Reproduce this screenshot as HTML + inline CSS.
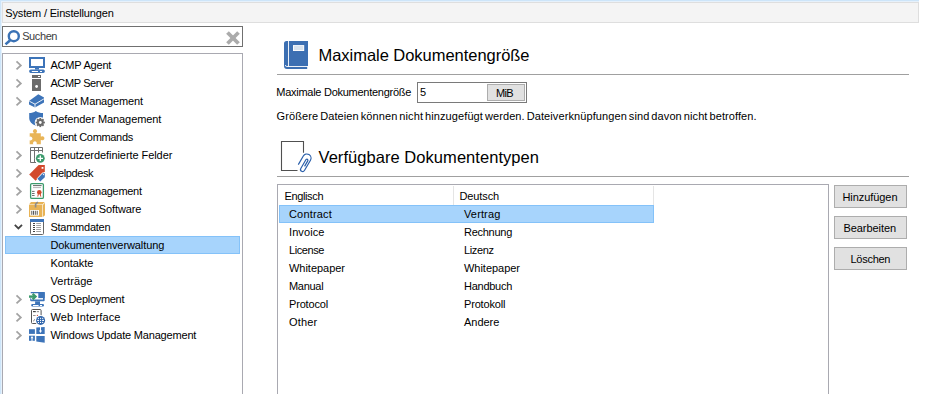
<!DOCTYPE html>
<html><head><meta charset="utf-8">
<style>
html,body{margin:0;padding:0;width:925px;height:407px;overflow:hidden;background:#fff;}
body{position:relative;font-family:"Liberation Sans",sans-serif;}
.a{position:absolute;box-sizing:border-box;}
.t{position:absolute;white-space:pre;font-family:"Liberation Sans",sans-serif;}
svg{position:absolute;overflow:visible;}
</style></head><body>
<!-- window frame blue lines -->
<div class="a" style="left:0;top:0;width:919px;height:1px;background:#cde5f9"></div>
<div class="a" style="left:0;top:1px;width:919px;height:1px;background:#e6f1fb"></div>
<div class="a" style="left:0;top:0;width:1px;height:394px;background:#cde5f9"></div>
<div class="a" style="left:1px;top:1px;width:1px;height:393px;background:#e6f1fb"></div>
<!-- title bar -->
<div class="a" style="left:2px;top:2px;width:917px;height:21px;background:#f4f4f4;border:1px solid #dedede"></div>
<!-- search box -->
<div class="a" style="left:2px;top:26px;width:241px;height:21px;background:#fff;border:1px solid #707070"></div>
<!-- tree -->
<div class="a" style="left:2px;top:53px;width:241px;height:341px;background:#fff;border:1px solid #a9a9b1;border-bottom:none"></div>
<!-- tree selection -->
<div class="a" style="left:5px;top:236px;width:235px;height:18px;background:#a7d4fc;border:1px solid #84c2f9"></div>
<!-- rules -->
<div class="a" style="left:277px;top:74px;width:632px;height:1px;background:#a0a0a0"></div>
<div class="a" style="left:277px;top:176px;width:632px;height:1px;background:#a0a0a0"></div>
<!-- input -->
<div class="a" style="left:417px;top:82px;width:110px;height:21px;background:#fff;border:1px solid #7a7a7a"></div>
<div class="a" style="left:487px;top:84px;width:38px;height:17px;background:#e1e1e1;border:1px solid #adadad"></div>
<!-- list -->
<div class="a" style="left:277px;top:184px;width:552px;height:210px;background:#fff;border:1px solid #a9a9b1;border-bottom:none"></div>
<div class="a" style="left:453px;top:186px;width:1px;height:19px;background:#e5e5e5"></div>
<div class="a" style="left:653px;top:186px;width:1px;height:19px;background:#e5e5e5"></div>
<div class="a" style="left:279px;top:205px;width:375px;height:18px;background:#a7d4fc;border:1px solid #84c2f9"></div>
<!-- buttons -->
<div class="a" style="left:834px;top:185px;width:73px;height:23px;background:#e1e1e1;border:1px solid #adadad"></div>
<div class="a" style="left:834px;top:216px;width:73px;height:23px;background:#e1e1e1;border:1px solid #adadad"></div>
<div class="a" style="left:834px;top:247px;width:73px;height:23px;background:#e1e1e1;border:1px solid #adadad"></div>
<svg style="left:0;top:0" width="925" height="407" viewBox="0 0 925 407">
<!-- search icon -->
<circle cx="13.8" cy="36.2" r="5" fill="none" stroke="#3a72b5" stroke-width="2.4"/>
<path d="M4.6 43.4L9 39.4L11 41.2L6.4 45.2Z" fill="#3a72b5"/>
<!-- clear X -->
<line x1="227.5" y1="32.5" x2="238.5" y2="43.5" stroke="#ababab" stroke-width="3.8"/>
<line x1="238.5" y1="32.5" x2="227.5" y2="43.5" stroke="#ababab" stroke-width="3.8"/>
<!-- chevrons -->
<g fill="none" stroke="#a3a3a3" stroke-width="1.8">
<path d="M16.5 61.4L20.8 65.4L16.5 69.4"/>
<path d="M16.5 79.4L20.8 83.4L16.5 87.4"/>
<path d="M16.5 97.4L20.8 101.4L16.5 105.4"/>
<path d="M16.5 151.4L20.8 155.4L16.5 159.4"/>
<path d="M16.5 169.4L20.8 173.4L16.5 177.4"/>
<path d="M16.5 187.4L20.8 191.4L16.5 195.4"/>
<path d="M16.5 205.4L20.8 209.4L16.5 213.4"/>
<path d="M16.5 295.4L20.8 299.4L16.5 303.4"/>
<path d="M16.5 313.4L20.8 317.4L16.5 321.4"/>
<path d="M16.5 331.4L20.8 335.4L16.5 339.4"/>
</g>
<path d="M14.8 224.8L18.4 228.4L22 224.8" fill="none" stroke="#444" stroke-width="1.8"/>

<!-- 0 monitor -->
<g fill="#3d74b9">
<path d="M29 57h16v11h-16z M31 59v7h12v-7z" fill-rule="evenodd"/>
<rect x="35" y="68" width="4" height="1.6"/>
<path d="M30.8 69.5h12.4a1.7 1.7 0 0 1 0 3.4h-12.4a1.7 1.7 0 0 1 0-3.4z M31.8 71h6.2v1h-6.2z M40 71h2v1h-2z" fill-rule="evenodd"/>
</g>
<!-- 1 server -->
<g fill="#6b6b6b">
<path d="M32 75h9v3h-9z M38 76v1h2v-1z" fill-rule="evenodd"/>
<rect x="32" y="79" width="9" height="12"/>
<circle cx="36.6" cy="86.5" r="1.4" fill="#fff"/>
</g>
<!-- 2 asset box -->
<path d="M29 101L38.3 94.2L44 97.5V102.5L35 107.6L29 104.5Z" fill="#3d74b9"/>
<path d="M29.3 101.2L35 104.2L44 98.8M35 104.2V107.6" fill="none" stroke="#fff" stroke-width="0.9"/>
<!-- 3 shield with gear -->
<path d="M35.8 111C34 112.4 31.5 113 29.2 113V118C29.2 121.5 32 124.3 35.8 125.7C39.6 124.3 43 121.5 43 118V113C40.3 113 37.8 112.4 35.8 111Z" fill="#3d74b9"/>
<circle cx="40.3" cy="122.5" r="5.6" fill="#fff"/>
<g transform="translate(40.3 122.5)" fill="#6b6b6b">
<circle r="3.4"/>
<g id="teeth"><rect x="-0.9" y="-4.6" width="1.8" height="9.2"/><rect x="-0.9" y="-4.6" width="1.8" height="9.2" transform="rotate(45)"/><rect x="-0.9" y="-4.6" width="1.8" height="9.2" transform="rotate(90)"/><rect x="-0.9" y="-4.6" width="1.8" height="9.2" transform="rotate(135)"/></g>
<circle r="1.4" fill="#fff"/>
</g>
<!-- 4 puzzle -->
<g fill="#e9b558">
<path d="M29.7 133.2H33.6V132.6A2.05 2.05 0 1 1 36.4 132.6V133.2H40.8V136.5H41.4A2.05 2.05 0 1 1 41.4 140.1H40.8V144.2H36.5A1.9 1.9 1 1 0 33.3 144.2H29.7V140.2A1.9 1.9 0 1 0 29.7 136.8Z"/>
</g>
<!-- 5 custom fields grid + plus -->
<g fill="none" stroke="#707070" stroke-width="1">
<path d="M30.5 162.5V147.5H42.5V152.5M30.5 150.5H42.5M34.5 147.5V162.5M38.5 147.5V152.5M30.5 162.5H36"/>
</g>
<circle cx="40.3" cy="158.3" r="5.4" fill="#fff"/>
<circle cx="40.3" cy="158.3" r="4.4" fill="#3c9a6c"/>
<path d="M40.3 155.6V161M37.6 158.3H43" stroke="#fff" stroke-width="1.3"/>
<!-- 6 helpdesk tags -->
<path d="M38.6 165H44.8V171.5L35.6 180.8L29.2 174.4Z" fill="#d24a2d"/>
<rect x="41.6" y="167" width="1.8" height="1.8" fill="#fff"/>
<path d="M42.4 172.4L45.2 172.4V177.3L40.2 182.4L36.6 178.8Z" fill="#fff"/>
<path d="M42.8 173.2H44.8V177.2L40.2 181.6L37.4 178.8Z" fill="#3d74b9"/>
<circle cx="43.5" cy="174.6" r="0.7" fill="#fff"/>
<!-- 7 license certificate -->
<rect x="30.6" y="183.6" width="12.8" height="14.8" rx="1.2" fill="#fff" stroke="#3c9a6c" stroke-width="1.3"/>
<path d="M33 185.6H41.6" stroke="#555" stroke-width="0.9"/>
<path d="M33 187.6H41" stroke="#a0a0a0" stroke-width="0.8"/>
<path d="M32 191.4H34.6M32 193.5H34.6M32 195.5H34.6" stroke="#606060" stroke-width="0.9"/>
<path d="M38.4 193.6L37.8 196.6M40.2 193.6L40.8 196.6" stroke="#d24a2d" stroke-width="1"/>
<circle cx="39.3" cy="192.2" r="2.3" fill="#d24a2d"/>
<!-- 8 managed software box -->
<path d="M31 202H44.8L42.4 204.4H29Z" fill="#e8b356"/>
<rect x="29" y="205" width="13.3" height="12" fill="#e8b356"/>
<path d="M42.9 205L45 202.8V215.2L42.9 217Z" fill="#e8b356"/>
<path d="M37.8 202L35.6 204.2V207.6" fill="none" stroke="#8c8c8c" stroke-width="1.6"/>
<rect x="30.2" y="210" width="8.8" height="5.6" fill="#fff"/>
<path d="M31.8 210.8V214.8M33.5 210.8V214.8M35.3 210.8V214.8M37.2 210.8V214.8" stroke="#444" stroke-width="0.9"/>
<!-- 9 stammdaten -->
<rect x="30.5" y="219.5" width="13" height="15" rx="1" fill="#fff" stroke="#666" stroke-width="1"/>
<rect x="30" y="219" width="14" height="3" fill="#3d74b9"/>
<path d="M33 223.5H35M33 225.5H35M33 227.5H35M33 229.5H35M33 231.5H35" stroke="#444" stroke-width="1"/>
<path d="M36.2 223.5H41M36.2 225.5H41M36.2 227.5H41M36.2 229.5H41M36.2 231.5H41" stroke="#999" stroke-width="0.9"/>
<!-- 13 OS deployment -->
<g fill="#3d74b9">
<path d="M30.7 292H43.7A1 1 0 0 1 44.7 293V300.3A1 1 0 0 1 43.7 301.3H31.2A1 1 0 0 1 30.2 300.3V298.2H31.2V299.6H43V293.3H30.7Z"/>
<rect x="38.3" y="292" width="6.4" height="6.1"/>
<rect x="35.1" y="301.3" width="4.9" height="2.7"/>
<path d="M32.4 304H42.8A1.25 1.25 0 0 1 42.8 306.5H32.4A1.25 1.25 0 0 1 32.4 304Z M33 305h5.6v0.9h-5.6z M40 305h2v0.9h-2z" fill-rule="evenodd"/>
</g>
<path d="M29 296.6H35" fill="none" stroke="#3c9a6c" stroke-width="2.4"/>
<path d="M32.6 293.9L35.6 296.6L32.6 299.4" fill="none" stroke="#3c9a6c" stroke-width="2.2"/>
<!-- 14 web interface -->
<rect x="31.5" y="309.5" width="9.6" height="14" rx="1" fill="#fff" stroke="#555" stroke-width="1"/>
<path d="M33 311.6H35.8" stroke="#444" stroke-width="1.2"/>
<path d="M36.8 311.6H39" stroke="#999" stroke-width="1.2"/>

<path d="M33 315.5H35.6" stroke="#999" stroke-width="1"/>
<circle cx="37.4" cy="315.4" r="0.6" fill="#d24a2d"/>
<path d="M33.2 321.2L35 319.4" stroke="#666" stroke-width="0.9"/>
<circle cx="40.6" cy="320.4" r="5.4" fill="#fff"/>
<circle cx="40.6" cy="320.4" r="4.5" fill="#2f64ab"/>
<g fill="#fff"><rect x="37.9" y="317.8" width="1.1" height="1.1"/><rect x="40.0" y="317.8" width="1.1" height="1.1"/><rect x="42.1" y="317.8" width="1.1" height="1.1"/>
<rect x="37.1" y="319.85" width="1.9" height="1.1"/><rect x="40.0" y="319.85" width="1.1" height="1.1"/><rect x="42.1" y="319.85" width="1.9" height="1.1"/>
<rect x="37.9" y="321.9" width="1.1" height="1.1"/><rect x="40.0" y="321.9" width="1.1" height="1.1"/><rect x="42.1" y="321.9" width="1.1" height="1.1"/></g>
<!-- 15 windows -->
<g fill="#3d74b9">
<rect x="29" y="329.2" width="5.9" height="4.7"/>
<path d="M36.3 327.6L44.7 327.1V334.1H36.3Z"/>
<rect x="29" y="335.7" width="5.9" height="5.1"/>
<path d="M36.3 335.9H44.7V342.8L36.3 341.6Z"/>
</g>
<path d="M40.5 327V331" fill="none" stroke="#fff" stroke-width="1"/>
<path d="M38.9 330.6H42.1L40.5 332.9Z" fill="#fff"/>
<path d="M32 341V337.6" fill="none" stroke="#fff" stroke-width="1"/>
<path d="M30.5 338.2H33.5L32 336.1Z" fill="#fff"/>

<!-- book icon -->
<path d="M286.5 41H308V66H307.2V69H286.9A2.9 2.9 0 0 1 284 66.1V43.5A2.5 2.5 0 0 1 286.5 41Z" fill="#3c6fb2"/>
<path d="M288.5 41V66.5M308.5 66.5H286.8A1.4 1.4 0 0 1 285.4 65.1" fill="none" stroke="#fff" stroke-width="0.9"/>
<rect x="293" y="45.1" width="11.2" height="5.9" fill="#fff"/>
<rect x="293.8" y="45.9" width="9.6" height="4.3" fill="#d9e3ee"/>
<!-- document + paperclip -->
<path d="M303.5 152.8V141.5H281.5V170.5H297.5" fill="none" stroke="#505050" stroke-width="1.1"/>
<path d="M298.3 164.6L303.31 156.01A4.15 4.15 0 0 1 310.48 160.19L304.43 170.56A2.1 2.1 0 0 1 300.8 168.45L305.87 159.76A1.1 1.1 0 0 1 307.77 160.87L304.55 166.4" fill="none" stroke="#2a5faa" stroke-width="1.2"/>
</svg>

<div class="t" style="left:5.3px;top:4px;font-size:11px;line-height:18px;letter-spacing:-0.161px;word-spacing:0px;color:#000;">System / Einstellungen</div>
<div class="t" style="left:22.2px;top:27px;font-size:11px;line-height:18px;letter-spacing:-0.403px;word-spacing:0px;color:#3c3c3c;">Suchen</div>
<div class="t" style="left:50.4px;top:56px;font-size:11px;line-height:18px;letter-spacing:-0.198px;word-spacing:0px;color:#000;">ACMP Agent</div>
<div class="t" style="left:50.4px;top:74px;font-size:11px;line-height:18px;letter-spacing:-0.375px;word-spacing:0px;color:#000;">ACMP Server</div>
<div class="t" style="left:50.4px;top:92px;font-size:11px;line-height:18px;letter-spacing:-0.139px;word-spacing:0px;color:#000;">Asset Management</div>
<div class="t" style="left:50.4px;top:110px;font-size:11px;line-height:18px;letter-spacing:-0.084px;word-spacing:0px;color:#000;">Defender Management</div>
<div class="t" style="left:50.4px;top:128px;font-size:11px;line-height:18px;letter-spacing:-0.330px;word-spacing:0px;color:#000;">Client Commands</div>
<div class="t" style="left:50.4px;top:146px;font-size:11px;line-height:18px;letter-spacing:-0.063px;word-spacing:0px;color:#000;">Benutzerdefinierte Felder</div>
<div class="t" style="left:50.4px;top:164px;font-size:11px;line-height:18px;letter-spacing:-0.380px;word-spacing:0px;color:#000;">Helpdesk</div>
<div class="t" style="left:50.4px;top:182px;font-size:11px;line-height:18px;letter-spacing:-0.294px;word-spacing:0px;color:#000;">Lizenzmanagement</div>
<div class="t" style="left:50.4px;top:200px;font-size:11px;line-height:18px;letter-spacing:-0.083px;word-spacing:0px;color:#000;">Managed Software</div>
<div class="t" style="left:50.4px;top:218px;font-size:11px;line-height:18px;letter-spacing:-0.242px;word-spacing:0px;color:#000;">Stammdaten</div>
<div class="t" style="left:50.4px;top:236px;font-size:11px;line-height:18px;letter-spacing:-0.083px;word-spacing:0px;color:#000;">Dokumentenverwaltung</div>
<div class="t" style="left:50.4px;top:254px;font-size:11px;line-height:18px;letter-spacing:-0.060px;word-spacing:0px;color:#000;">Kontakte</div>
<div class="t" style="left:50.4px;top:272px;font-size:11px;line-height:18px;letter-spacing:0.072px;word-spacing:0px;color:#000;">Verträge</div>
<div class="t" style="left:50.4px;top:290px;font-size:11px;line-height:18px;letter-spacing:-0.296px;word-spacing:0px;color:#000;">OS Deployment</div>
<div class="t" style="left:50.4px;top:308px;font-size:11px;line-height:18px;letter-spacing:0.152px;word-spacing:0px;color:#000;">Web Interface</div>
<div class="t" style="left:50.4px;top:326px;font-size:11px;line-height:18px;letter-spacing:-0.184px;word-spacing:0px;color:#000;">Windows Update Management</div>
<div class="t" style="left:318.5px;top:43px;font-size:16.5px;line-height:24px;letter-spacing:-0.037px;word-spacing:0px;color:#000;">Maximale Dokumentengröße</div>
<div class="t" style="left:318.5px;top:145px;font-size:16.5px;line-height:24px;letter-spacing:0.051px;word-spacing:0px;color:#000;">Verfügbare Dokumententypen</div>
<div class="t" style="left:276.3px;top:83px;font-size:11px;line-height:18px;letter-spacing:-0.271px;word-spacing:0px;color:#000;">Maximale Dokumentengröße</div>
<div class="t" style="left:420px;top:83px;font-size:11px;line-height:18px;letter-spacing:0.000px;word-spacing:0px;color:#000;">5</div>
<div class="t" style="left:496px;top:84px;font-size:11px;line-height:18px;letter-spacing:-0.727px;word-spacing:0px;color:#000;">MiB</div>
<div class="t" style="left:276.6px;top:107px;font-size:11px;line-height:18px;letter-spacing:0.097px;word-spacing:-1.2px;color:#000;">Größere Dateien können nicht hinzugefügt werden. Dateiverknüpfungen sind davon nicht betroffen.</div>
<div class="t" style="left:284.5px;top:187px;font-size:11px;line-height:18px;letter-spacing:-0.368px;word-spacing:0px;color:#000;">Englisch</div>
<div class="t" style="left:459.5px;top:187px;font-size:11px;line-height:18px;letter-spacing:-0.110px;word-spacing:0px;color:#000;">Deutsch</div>
<div class="t" style="left:289px;top:205px;font-size:11px;line-height:18px;letter-spacing:0.160px;word-spacing:0px;color:#000;">Contract</div>
<div class="t" style="left:464px;top:205px;font-size:11px;line-height:18px;letter-spacing:0.139px;word-spacing:0px;color:#000;">Vertrag</div>
<div class="t" style="left:289px;top:223px;font-size:11px;line-height:18px;letter-spacing:0.090px;word-spacing:0px;color:#000;">Invoice</div>
<div class="t" style="left:464px;top:223px;font-size:11px;line-height:18px;letter-spacing:-0.265px;word-spacing:0px;color:#000;">Rechnung</div>
<div class="t" style="left:289px;top:241px;font-size:11px;line-height:18px;letter-spacing:-0.420px;word-spacing:0px;color:#000;">License</div>
<div class="t" style="left:464px;top:241px;font-size:11px;line-height:18px;letter-spacing:-0.379px;word-spacing:0px;color:#000;">Lizenz</div>
<div class="t" style="left:289px;top:259px;font-size:11px;line-height:18px;letter-spacing:-0.030px;word-spacing:0px;color:#000;">Whitepaper</div>
<div class="t" style="left:464px;top:259px;font-size:11px;line-height:18px;letter-spacing:-0.030px;word-spacing:0px;color:#000;">Whitepaper</div>
<div class="t" style="left:289px;top:277px;font-size:11px;line-height:18px;letter-spacing:-0.296px;word-spacing:0px;color:#000;">Manual</div>
<div class="t" style="left:464px;top:277px;font-size:11px;line-height:18px;letter-spacing:-0.265px;word-spacing:0px;color:#000;">Handbuch</div>
<div class="t" style="left:289px;top:295px;font-size:11px;line-height:18px;letter-spacing:-0.166px;word-spacing:0px;color:#000;">Protocol</div>
<div class="t" style="left:464px;top:295px;font-size:11px;line-height:18px;letter-spacing:-0.175px;word-spacing:0px;color:#000;">Protokoll</div>
<div class="t" style="left:289px;top:313px;font-size:11px;line-height:18px;letter-spacing:0.171px;word-spacing:0px;color:#000;">Other</div>
<div class="t" style="left:464px;top:313px;font-size:11px;line-height:18px;letter-spacing:-0.017px;word-spacing:0px;color:#000;">Andere</div>
<div class="t" style="left:842.5px;top:188px;font-size:11px;line-height:18px;letter-spacing:-0.073px;word-spacing:0px;color:#000;">Hinzufügen</div>
<div class="t" style="left:843.5px;top:219px;font-size:11px;line-height:18px;letter-spacing:-0.069px;word-spacing:0px;color:#000;">Bearbeiten</div>
<div class="t" style="left:850.5px;top:250px;font-size:11px;line-height:18px;letter-spacing:-0.266px;word-spacing:0px;color:#000;">Löschen</div>
</body></html>
